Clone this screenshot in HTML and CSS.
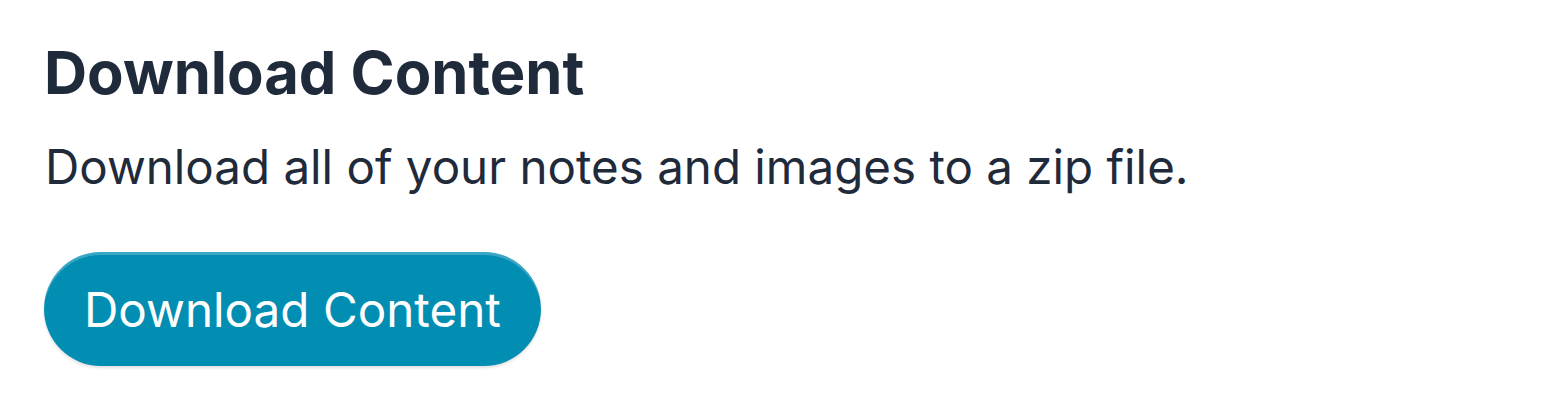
FILE: index.html
```html
<!DOCTYPE html>
<html>
<head>
<meta charset="utf-8">
<link rel="stylesheet" href="styles.css">
</head>
<body>
<section class="panel">
  <h2 class="title">Download Content</h2>
  <p class="desc">Download all of your notes and images to a zip file.</p>
  <button class="btn">Download Content</button>
</section>
</body>
</html>
```
FILE: styles.css
```css
html, body {
  margin: 0;
  padding: 0;
  background: #ffffff;
}
body {
  font-family: Inter, "Noto Sans", sans-serif;
  color: #1f2a3b;
}
.panel {
  padding: 36px 44px;
  display: flex;
  flex-direction: column;
  align-items: flex-start;
}
.title {
  margin: 0;
  font-size: 59.7px;
  font-weight: 700;
  line-height: 72px;
}
.desc {
  margin: 31px 0 0 1px;
  font-size: 47.5px;
  font-weight: 400;
  line-height: 56px;
}
.btn {
  margin-top: 57px;
  height: 114px;
  padding: 0 40px;
  border: none;
  border-radius: 57px;
  background: #028eb3;
  color: #ffffff;
  font-family: Inter, "Noto Sans", sans-serif;
  font-size: 47.6px;
  font-weight: 400;
  box-shadow: inset 0 3px 0 rgba(255,255,255,0.22), 0 2px 3px rgba(0,0,0,0.12);
}
```
